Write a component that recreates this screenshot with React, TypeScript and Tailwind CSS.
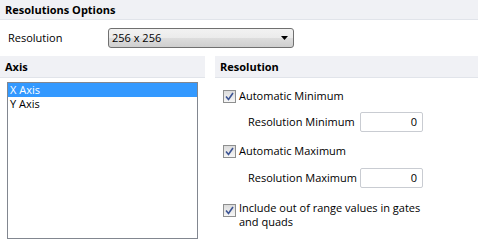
import React from 'react'

function Check() {
  return (
    <span className="inline-flex h-[13px] w-[13px] shrink-0 items-center justify-center border border-[#8e8f8f] bg-[linear-gradient(#dcdcdc,#f6f6f6)]">
      <svg width="9" height="9" viewBox="0 0 9 9">
        <path d="M1 4.5 L3.5 7.5 L8 1" fill="none" stroke="#3c5494" strokeWidth="1.6" />
      </svg>
    </span>
  )
}

function SectionHeader({ title }: { title: string }) {
  return (
    <div className="flex h-[22px] items-center border-b border-[#e1e4ea] bg-[#f0f1f5] px-[5px] font-bold">
      {title}
    </div>
  )
}

function NumberField({ label }: { label: string }) {
  return (
    <div className="flex items-center pl-[25px]">
      <span className="w-[112px] whitespace-nowrap">{label}</span>
      <div className="flex h-[20px] w-[63px] items-center justify-end rounded-[2px] border border-[#c9ccd2] bg-white pr-[5px]">
        0
      </div>
    </div>
  )
}

export default function App() {
  return (
    <div className="h-[240px] w-[478px] overflow-hidden bg-white text-[11px] leading-[14px] text-black [font-family:'Segoe_UI','Open_Sans',sans-serif]">
      <div className="flex h-[20px] items-center border-b border-[#e1e4ea] bg-[#f0f1f5] px-[5px] font-bold">
        Resolutions Options
      </div>

      <div className="flex h-[36px] items-start pl-[8px] pt-[8px]">
        <span className="mt-[3px] w-[100px]">Resolution</span>
        <div className="flex h-[20px] w-[186px] items-center justify-between rounded-[3px] border border-[#707070] bg-[linear-gradient(#f2f2f2_0%,#ebebeb_50%,#dddddd_50%,#cfcfcf_100%)] pl-[3px] pr-[5px]">
          <span>256 x 256</span>
          <svg width="7" height="4" viewBox="0 0 7 4">
            <path d="M0 0 H7 L3.5 4 Z" fill="#000" />
          </svg>
        </div>
      </div>

      <div className="flex gap-[10px]">
        {/* Axis */}
        <div className="flex w-[205px] flex-col">
          <SectionHeader title="Axis" />
          <div className="ml-[7px] mt-[4px] h-[157px] w-[191px] border border-[#828790] bg-white">
            <div className="flex h-[14px] items-center bg-[#3399ff] pl-[2px] text-white">X Axis</div>
            <div className="flex h-[14px] items-center pl-[2px]">Y Axis</div>
          </div>
        </div>

        {/* Resolution */}
        <div className="flex flex-1 flex-col">
          <SectionHeader title="Resolution" />
          <div className="flex flex-col pl-[8px] pt-[10px]">
            <label className="flex h-[16px] items-center gap-[3px]">
              <Check />
              <span>Automatic Minimum</span>
            </label>
            <div className="mt-[8px]">
              <NumberField label="Resolution Minimum" />
            </div>
            <label className="mt-[11px] flex h-[16px] items-center gap-[3px]">
              <Check />
              <span>Automatic Maximum</span>
            </label>
            <div className="mt-[9px]">
              <NumberField label="Resolution Maximum" />
            </div>
            <label className="mt-[13px] flex items-start gap-[3px]">
              <span className="mt-[3px]">
                <Check />
              </span>
              <span className="whitespace-nowrap">
                Include out of range values in gates
                <br />
                and quads
              </span>
            </label>
          </div>
        </div>
      </div>
    </div>
  )
}
